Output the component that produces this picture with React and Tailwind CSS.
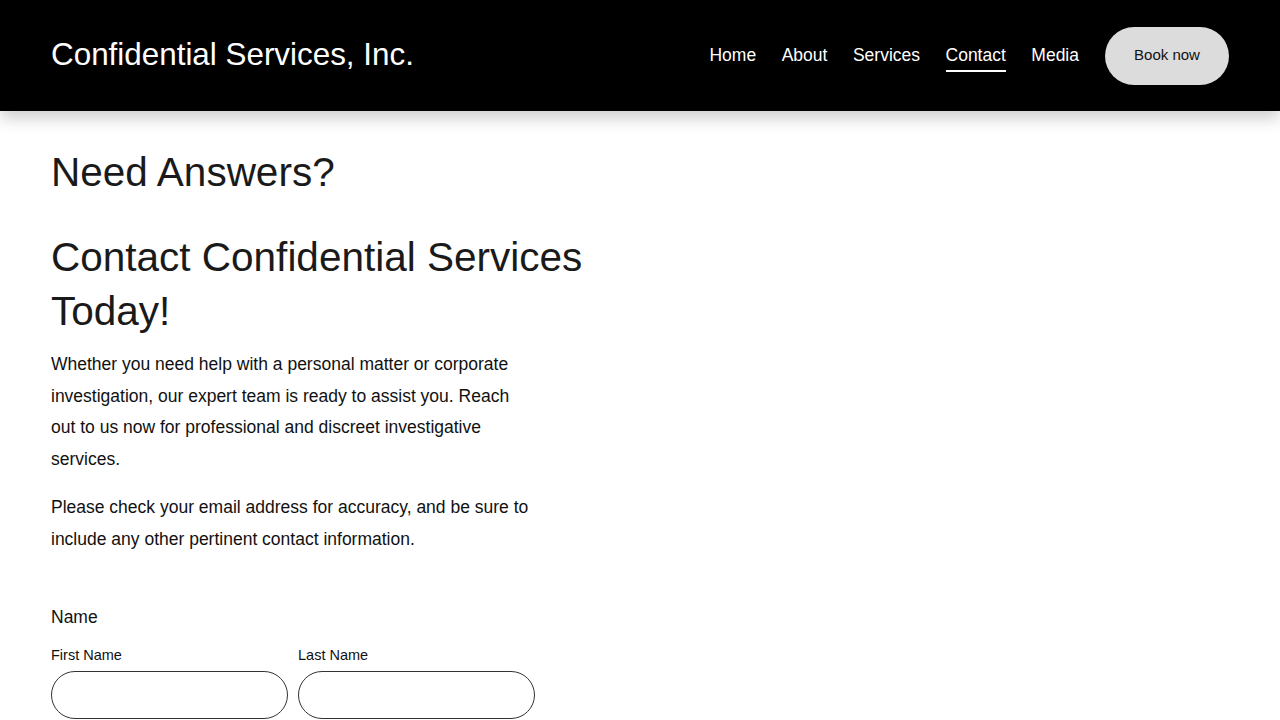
export default function App() {
  const font = { fontFamily: '"Liberation Sans", Arial, sans-serif' };
  return (
    <div className="min-h-[720px] bg-white" style={font}>
      <header className="h-[111px] bg-black flex items-center justify-between pl-[51px] pr-[51px] shadow-[0_8px_14px_rgba(0,0,0,0.18)] relative z-10">
        <div className="text-white text-[31.4px] leading-none -mt-[2px]">Confidential Services, Inc.</div>
        <nav className="flex items-center">
          <a className="text-white text-[17.5px] mr-[25.5px]">Home</a>
          <a className="text-white text-[17.5px] mr-[25.5px]">About</a>
          <a className="text-white text-[17.5px] mr-[25.5px]">Services</a>
          <a className="text-white text-[17.5px] mr-[25.5px] relative">
            Contact
            <span className="absolute left-0 right-0 -bottom-[3px] h-[2px] bg-white"></span>
          </a>
          <a className="text-white text-[17.5px] mr-[26px]">Media</a>
          <button className="w-[124px] h-[58px] rounded-full bg-[#dcdcdc] text-[#111] text-[15px]">Book now</button>
        </nav>
      </header>
      <main className="pl-[51px] pt-[34px]">
        <h1 className="text-[40.5px] leading-[54px] text-[#1a1a1a]">Need Answers?</h1>
        <h2 className="text-[40.5px] leading-[54px] text-[#1a1a1a] mt-[31px] w-[560px]">Contact Confidential Services Today!</h2>
        <div className="w-[485px] text-[17.5px] leading-[31.7px] text-[#111] mt-[11px]">
          <p>Whether you need help with a personal matter or corporate investigation, our expert team is ready to assist you. Reach out to us now for professional and discreet investigative services.</p>
          <p className="mt-[16px]">Please check your email address for accuracy, and be sure to include any other pertinent contact information.</p>
        </div>
        <div className="mt-[49px] text-[17.5px] text-[#111]">Name</div>
        <div className="flex gap-[10px] mt-[18px]">
          <div className="flex flex-col">
            <label className="text-[14.5px] text-[#111] leading-none">First Name</label>
            <input className="mt-[8px] w-[237px] h-[48px] rounded-full border border-[#333] outline-none" />
          </div>
          <div className="flex flex-col">
            <label className="text-[14.5px] text-[#111] leading-none">Last Name</label>
            <input className="mt-[8px] w-[237px] h-[48px] rounded-full border border-[#333] outline-none" />
          </div>
        </div>
      </main>
    </div>
  );
}
